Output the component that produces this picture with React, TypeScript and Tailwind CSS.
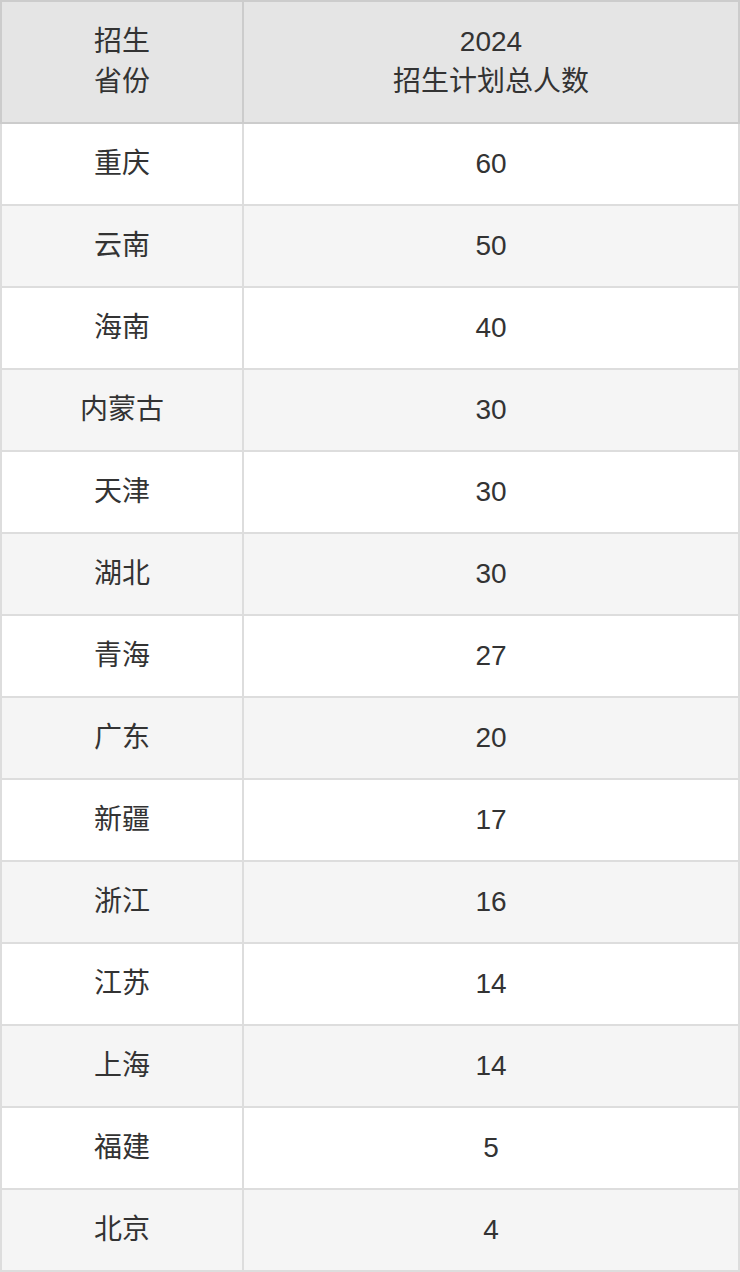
const rows: [string, string][] = [
  ['重庆', '60'],
  ['云南', '50'],
  ['海南', '40'],
  ['内蒙古', '30'],
  ['天津', '30'],
  ['湖北', '30'],
  ['青海', '27'],
  ['广东', '20'],
  ['新疆', '17'],
  ['浙江', '16'],
  ['江苏', '14'],
  ['上海', '14'],
  ['福建', '5'],
  ['北京', '4'],
];

export default function App() {
  return (
    <div
      className="w-[740px] bg-white text-[#333333]"
      style={{ fontFamily: '"Liberation Sans", "Noto Sans CJK SC", sans-serif' }}
    >
      <table className="w-full table-fixed border-collapse text-center text-[28px] leading-[40px]">
        <colgroup>
          <col className="w-[242px]" />
          <col />
        </colgroup>
        <thead>
          <tr className="bg-[#e5e5e5]">
            <th className="border-2 border-[#cccccc] px-4 py-[20px] font-normal">
              招生
              <br />
              省份
            </th>
            <th className="border-2 border-[#cccccc] px-4 py-[20px] font-normal">
              2024
              <br />
              招生计划总人数
            </th>
          </tr>
        </thead>
        <tbody>
          {rows.map(([prov, num], i) => (
            <tr key={prov} className={i % 2 === 1 ? 'bg-[#f5f5f5]' : 'bg-white'}>
              <td className="border-2 border-[#dddddd] px-4 py-[20px]">{prov}</td>
              <td className="border-2 border-[#dddddd] px-4 py-[20px]">{num}</td>
            </tr>
          ))}
        </tbody>
      </table>
    </div>
  );
}
